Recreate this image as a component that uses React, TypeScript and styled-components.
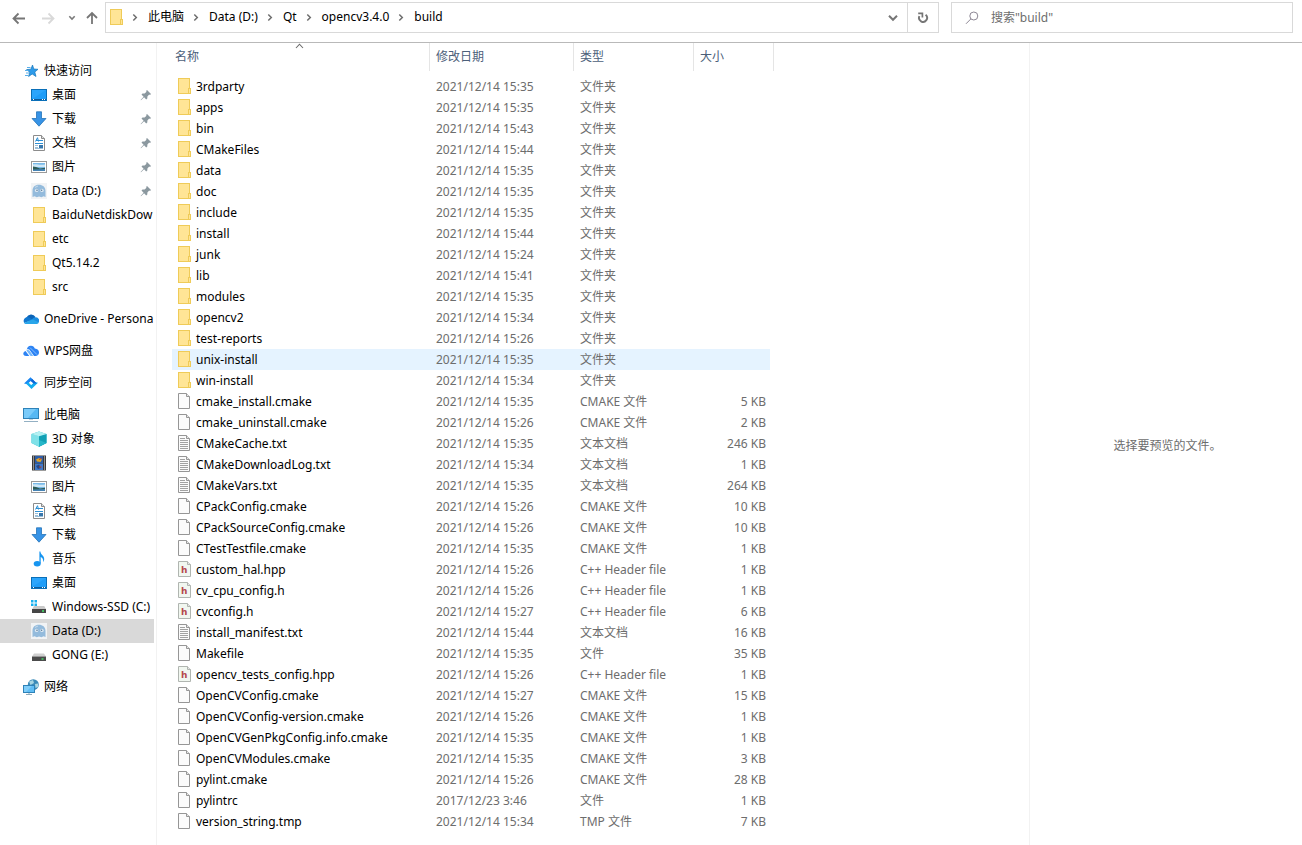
import React from "react";
import styled, { createGlobalStyle } from "styled-components";

const Global = createGlobalStyle`
  * { box-sizing: border-box; }
  body { margin: 0; background: #fff; }
  body, button, input, table {
    font-family: "Noto Sans", "Noto Sans CJK SC", sans-serif;
    font-size: 12px;
    line-height: 16px;
    color: #000;
  }
  svg { display: block; flex: none; }
`;

const Page = styled.div`
  display: flex;
  flex-direction: column;
  min-height: 100vh;
`;

const Toolbar = styled.header`
  display: flex;
  align-items: center;
  padding: 2px 9px 9px 7px;
  border-bottom: 1px solid #b9b9b9;
`;

const PlainButton = styled.button`
  display: flex;
  align-items: center;
  justify-content: center;
  margin: 0;
  padding: 0;
  border: 0;
  background: none;
  white-space: nowrap;
`;

const History = styled.nav`
  display: flex;
  align-items: center;
`;

const HistoryButton = styled(PlainButton)<{ $width: number }>`
  width: ${(p) => p.$width}px;
  height: 31px;
`;

const Fields = styled.div`
  display: grid;
  flex: 1;
  grid-template-columns: minmax(0, 39fr) minmax(0, 16fr);
  gap: 12px;
  min-width: 0;
`;

const AddressBar = styled.div`
  display: flex;
  height: 31px;
  border: 1px solid #d9d9d9;
`;

const Crumbs = styled.ol`
  display: flex;
  flex: 1;
  align-items: center;
  min-width: 0;
  margin: 0;
  padding: 0 0 2px 4px;
  overflow: hidden;
  list-style: none;
`;

const Crumb = styled.li`
  display: flex;
  align-items: center;
`;

const BarButton = styled(PlainButton)<{ $divided?: boolean }>`
  width: ${(p) => (p.$divided ? 31 : 28)}px;
  border-left: ${(p) => (p.$divided ? "1px solid #d9d9d9" : "0")};
`;

const SearchBox = styled.label`
  display: flex;
  align-items: center;
  gap: 12px;
  height: 31px;
  padding: 0 13px;
  border: 1px solid #d9d9d9;
`;

const SearchInput = styled.input`
  flex: 1;
  min-width: 0;
  padding: 0;
  border: 0;
  outline: 0;
  background: none;
  &::placeholder { color: #6d6d6d; opacity: 1; }
`;

const Body = styled.div`
  display: flex;
  flex: 1;
`;

const Sidebar = styled.nav`
  flex: none;
  width: 157px;
  padding: 16px 2px 0 0;
  border-right: 1px solid #f2f2f2;
`;

const Group = styled.ul`
  margin: 0 0 8px;
  padding: 0;
  list-style: none;
`;

const SideLink = styled.a<{ $nested: boolean; $active: boolean }>`
  display: flex;
  align-items: center;
  gap: 5px;
  height: 24px;
  padding-left: ${(p) => (p.$nested ? 31 : 23)}px;
  background: ${(p) => (p.$active ? "#d9d9d9" : "transparent")};
  color: #000;
  text-decoration: none;
`;

const SideLabel = styled.span`
  flex: 1;
  min-width: 0;
  overflow: hidden;
  white-space: nowrap;
`;

const PinSlot = styled.span`
  padding-right: 2px;
`;

const Main = styled.main`
  flex: 1;
  min-width: 617px;
  padding-left: 15px;
`;

const Files = styled.table`
  width: 602px;
  table-layout: fixed;
  border-collapse: separate;
  border-spacing: 0;
`;

const HeadCell = styled.th`
  position: relative;
  height: 28px;
  padding: 0;
  border-right: 1px solid #e5e5e5;
  font-weight: 400;
`;

const HeadButton = styled(PlainButton)<{ $first?: boolean }>`
  justify-content: flex-start;
  width: 100%;
  height: 28px;
  padding-left: ${(p) => (p.$first ? 3 : 6)}px;
  color: #4c607a;
`;

const SortMark = styled.span`
  position: absolute;
  top: 0;
  left: 0;
  right: 3px;
  display: flex;
  justify-content: center;
  pointer-events: none;
`;

const Spacer = styled.tbody`
  td { height: 5px; padding: 0; }
`;

const Cell = styled.td<{ $hot: boolean; $right?: boolean }>`
  height: 21px;
  padding: 0 4px 0 6px;
  overflow: hidden;
  background: ${(p) => (p.$hot ? "#e5f3ff" : "transparent")};
  color: #6d6d6d;
  text-align: ${(p) => (p.$right ? "right" : "left")};
  white-space: nowrap;
`;

const FileName = styled.span`
  display: flex;
  align-items: flex-start;
  gap: 5px;
  line-height: 17px;
  color: #000;
`;

const Preview = styled.aside`
  display: flex;
  align-items: center;
  justify-content: center;
  flex: 0 0 273px;
  padding: 3px 0 0 3px;
  border-left: 1px solid #f2f2f2;
  color: #6d6d6d;
`;

/* ---------- icons ---------- */

const Arrow = ({ color, flip }: { color: string; flip?: boolean }) => (
  <svg width="14" height="14" viewBox="0 0 14 14" fill="none" stroke={color} strokeWidth="1.8">
    {flip ? <path d="M1 7.5H12.5M7.5 2.5L12.5 7.5L7.5 12.5" /> : <path d="M13 7.5H1.5M6.5 2.5L1.5 7.5L6.5 12.5" />}
  </svg>
);

const UpArrow = () => (
  <svg width="12" height="14" viewBox="0 0 12 14" fill="none" stroke="#767676" strokeWidth="1.8">
    <path d="M6 13V2.5M1 7L6 2L11 7" />
  </svg>
);

const SmallDown = () => (
  <svg width="8" height="6" viewBox="0 0 8 6" fill="none" stroke="#7a7a7a" strokeWidth="1.6">
    <path d="M1.3 1.3L4 4L6.7 1.3" />
  </svg>
);

const WideDown = () => (
  <svg width="10" height="8" viewBox="0 0 10 8" fill="none" stroke="#767676" strokeWidth="2">
    <path d="M1 1.8L5 5.8L9 1.8" />
  </svg>
);

const CrumbChevron = () => (
  <svg width="25" height="16" viewBox="0 0 25 16" fill="none" stroke="#6e6e6e" strokeWidth="1.5">
    <path d="M10.3 5.5L13.3 8.5L10.3 11.5" />
  </svg>
);

const Refresh = () => (
  <svg width="12" height="14" viewBox="0 0 12 14" fill="none" stroke="#767676" strokeWidth="1.9">
    <path d="M8.6 3.8A4 4 0 1 1 2.4 5.2" />
    <path d="M1.2 2.4H5.4V6.6" strokeWidth="1.7" />
  </svg>
);

const SearchIcon = () => (
  <svg width="14" height="14" viewBox="0 0 14 14" fill="none" stroke="#8d8794" strokeWidth="1">
    <circle cx="8.8" cy="5" r="4" />
    <path d="M5.9 7.9L1 12.8" />
  </svg>
);

const SortArrow = () => (
  <svg width="9" height="6" viewBox="0 0 9 6" fill="none" stroke="#6a6a6a" strokeWidth="1.1">
    <path d="M1 5L4.5 1.2L8 5" />
  </svg>
);

const Pin = () => (
  <svg width="12" height="12" viewBox="0 0 12 12" fill="#8b989f">
    <path d="M7 1L11 5L10 6L9.2 5.6L7.4 7.5L7.3 9.5L6.2 10.4L4.1 8.3L1 11.3L.6 10.9L3.6 7.8L1.5 5.6L2.5 4.6L4.6 4.6L6.5 2.7L6.1 1.9Z" />
  </svg>
);

const FolderShape = () => (
  <g shapeRendering="crispEdges">
    <rect x="0.5" y="0.5" width="11" height="15" fill="#ffe596" stroke="#efcb58" />
    <rect x="10.5" y="10.5" width="2" height="5" fill="#ffe596" stroke="#efcb58" />
  </g>
);

const Folder = () => (
  <svg width="13" height="16" viewBox="0 0 13 16"><FolderShape /></svg>
);

const PageIcon = ({ kind }: { kind: "file" | "text" | "header" }) => {
  const edge = kind === "header" ? "#b0b5b0" : "#969696";
  return (
    <svg width="13" height="16" viewBox="0 0 13 16">
      <path
        d={kind === "header" ? "M.5 .5H9.5L12.5 3.5V15.5H.5Z" : "M.5 .5H8.5L11.5 3.5V15.5H.5Z"}
        fill={kind === "header" ? "#f1f7f0" : "#fbfbfb"}
        stroke={edge}
      />
      <path
        d={kind === "header" ? "M9.5 .5V3.5H12.5" : "M8.5 .5V3.5H11.5"}
        fill="#e6e6e6"
        stroke={edge}
      />
      {kind === "text" && (
        <path d="M2 3.5H7M2 5.5H10M2 7.5H10M2 9.5H10M2 11.5H10M2 13.5H10" stroke="#a2a2a2" shapeRendering="crispEdges" />
      )}
      {kind === "header" && (
        <text x="3" y="12" fontFamily="DejaVu Sans, sans-serif" fontWeight="700" fontSize="9" fill="#b5474c">h</text>
      )}
    </svg>
  );
};

type SideIconName =
  | "star" | "desktop" | "download" | "doc" | "picture" | "ghost" | "folder" | "onedrive" | "wps"
  | "sync" | "pc" | "cube" | "video" | "music" | "ssd" | "drive" | "network";

const drawings: Record<SideIconName, React.ReactNode> = {
  star: (
    <>
      <path d="M9.5 2L10.8 6L15 6.3L11.8 9L13 13.5L9.2 11L5.6 13.5L6.8 9.2L3.6 6.6L7.9 6.2Z" fill="#2e9bea" stroke="#1577bb" strokeWidth=".7" />
      <path d="M4 4.5H7.5M2 7.5H5.5M3 10H6M2 12.5H5.5" stroke="#5aaee8" strokeWidth="1" />
    </>
  ),
  desktop: (
    <>
      <rect x=".5" y="2.5" width="15" height="11" fill="#1f9df8" stroke="#0a6fb8" />
      <path d="M1 3L15 3L1 12Z" fill="#38adff" opacity=".5" />
      <path d="M1 12.5H15" stroke="#0d5c9c" />
      <path d="M2 12.5H3M11 12.5H12M13 12.5H14" stroke="#fff" />
    </>
  ),
  download: <path d="M5.5 .8H10.5V7.5H15L8 15.2L1 7.5H5.5Z" fill="#3793e6" stroke="#2474b8" strokeWidth=".8" />,
  doc: (
    <>
      <path d="M2.5 .5H10.5L13.5 3.5V15.5H2.5Z" fill="#fff" stroke="#8c8c8c" />
      <path d="M10.5 .5V3.5H13.5" fill="#ddd" stroke="#8c8c8c" />
      <path d="M4.5 6.5L6.5 2.7L7.5 6.5M5 5.5H12M4 8.5H12" stroke="#2c8fd4" fill="none" />
      <path d="M4 10.5H7M4 12.5H7M4 13.5H12" stroke="#9cbfd8" />
      <rect x="8" y="10" width="4" height="3" fill="#3977ac" />
    </>
  ),
  picture: (
    <>
      <rect x=".5" y="2.5" width="15" height="11" fill="#fff" stroke="#9a9a9a" />
      <rect x="2" y="4" width="12" height="8" fill="#79bae8" />
      <path d="M2 5.5C5 4.5 8 6.5 14 5.5V8H2Z" fill="#cfe7f6" />
      <path d="M2 7.5L5 8L9 9.4L14 8.7V12H2Z" fill="#2e5c55" />
      <path d="M2 10.5L14 10V12H2Z" fill="#4583b4" />
    </>
  ),
  ghost: (
    <>
      <rect width="16" height="16" fill="#f1f3f5" />
      <path d="M1.5 14V8C1.5 4 4 1.8 7.8 1.8S14.5 4 14.5 8V14L12.5 13.2L10.5 14.3L8 13.4L5.8 14.3L3.6 13.2Z" fill="#94bbdc" />
      <path d="M4 4.4L7 3" stroke="#c7dcec" />
      <circle cx="5.6" cy="7.4" r="1.7" fill="#dfeaf3" />
      <circle cx="11" cy="7.4" r="1.7" fill="#dfeaf3" />
      <circle cx="6" cy="7.3" r=".8" fill="#5b7d9b" />
      <circle cx="10.6" cy="7.3" r=".8" fill="#5b7d9b" />
    </>
  ),
  folder: <g transform="translate(2 0)"><FolderShape /></g>,
  onedrive: (
    <>
      <path d="M3.5 6.6A5 5 0 0 1 12.5 5.9L9 10.6L2 8.6Z" fill="#0b64b8" />
      <path d="M3.6 6.2A3.9 3.9 0 0 0 1.3 12.1L10 8.8L6.6 6.8A4 4 0 0 0 3.6 6.2Z" fill="#1177cf" />
      <path d="M9.2 8A4.2 4.2 0 0 1 13 6.2A3.4 3.4 0 0 1 15.6 11.4L11 10.6Z" fill="#1b8ce0" />
      <path d="M1 11.9L9.5 8.3L15.9 11.4C15.2 12.6 14.2 13 13 13H4C2.8 13 1.8 12.8 1 11.9Z" fill="#29a6ea" />
    </>
  ),
  wps: (
    <>
      <path d="M4 6.1A4 4 0 0 1 11.8 5.6C14.6 5.8 16 7.6 16 9.6C16 11.8 14.5 13.1 12.5 13.1H11L6.3 6.4Z" fill="#2c83f4" />
      <path d="M3.2 6.8C4.6 6.4 6 6.8 7 8.2L10.2 13.1H7.6L4.2 8.4Z" fill="#74b7fb" />
      <path d="M2.6 7.9C1 8.5 .1 9.6 .3 11.1C.5 12.4 1.6 13.1 3 13.1H6.3Z" fill="#2c83f4" />
      <path d="M7 4.6L14 11.6" stroke="#9fcdfc" strokeWidth=".8" />
    </>
  ),
  sync: (
    <>
      <path d="M1 8.5L7.5 2.2L12.8 7.4L10.8 9.2L7.7 6.1L4.5 9.2Z" fill="#1a86f2" />
      <path d="M15 7.7L8.5 14L3.2 8.8L5.2 7L8.3 10.1L11.5 7Z" fill="#13aef0" />
      <path d="M9 3.7L13.8 8.4H10.6L7.7 6.1Z" fill="#0e65d6" />
      <path d="M8 6.4L9.8 8.1L8 9.8L6.2 8.1Z" fill="#fff" />
    </>
  ),
  pc: (
    <>
      <rect x=".5" y="1.5" width="15" height="10" fill="#57b8f3" stroke="#2e82b8" />
      <path d="M1 2H13L5 11H1Z" fill="#83d0fb" opacity=".8" />
      <path d="M6 12.5H10" stroke="#c3d2dc" />
      <path d="M1 14.5H15" stroke="#93b0c3" />
    </>
  ),
  cube: (
    <>
      <path d="M8 .5L15.5 3V12L8 15.8L.5 12V3Z" fill="#2cbccd" />
      <path d="M.5 3L8 5V15.8L.5 12Z" fill="#7fe1e8" />
      <path d="M8 5L15.5 3V12L8 15.8Z" fill="#11a0b5" />
      <path d="M.5 3L8 .5L15.5 3L8 5.3Z" fill="#b4f0f2" />
      <path d="M8 9L15.5 12L8 15.8Z" fill="#27b7c9" />
    </>
  ),
  video: (
    <>
      <rect x="1" y=".5" width="14" height="15" fill="#3a3a3a" />
      <path d="M2.5 1.5V15M13.5 1.5V15" stroke="#e8e8e8" strokeWidth="1" strokeDasharray="1 1" />
      <rect x="4" y="1" width="8" height="7" fill="#2d5ea8" />
      <rect x="4" y="8.5" width="8" height="6.5" fill="#3f78c9" />
      <path d="M5 4.5L8 3L11 4.5L9.5 7L6 6.5Z" fill="#e0a526" />
      <path d="M5 11L8 9.5L10 13L7 14Z" fill="#264884" />
      <path d="M8 4.5L10.5 3.5M8 12H10.5" stroke="#c4442c" />
    </>
  ),
  music: (
    <>
      <path d="M8.4 .5H9.4C9.8 4 13.2 4.5 13.2 8C13.2 9.3 12.6 10.3 12 11C12.5 8 11.5 6.7 9.7 6V12.5H8.4Z" fill="#1795f0" />
      <ellipse cx="6.2" cy="12.8" rx="3.5" ry="2.7" fill="#1795f0" />
    </>
  ),
  ssd: (
    <>
      <path d="M0 1H2.5V3.5H0ZM3.5 1H6V3.5H3.5ZM0 4.5H2.5V7H0ZM3.5 4.5H6V7H3.5Z" fill="#18b0ee" />
      <path d="M3 7H13.2L15 10H1.2Z" fill="#c9c9c9" />
      <path d="M1 10H15V14H1Z" fill="#464646" />
      <path d="M11 12H13" stroke="#45e36b" strokeWidth="1.4" />
    </>
  ),
  drive: (
    <>
      <path d="M3 6.5H13L15 9.5H1Z" fill="#d0d0d0" />
      <path d="M1 9.5H15V14H1Z" fill="#4b4b4b" />
      <path d="M10.5 12H12.5" stroke="#45e36b" strokeWidth="1.4" />
    </>
  ),
  network: (
    <>
      <circle cx="10.3" cy="5.7" r="5.5" fill="#3b8bb8" />
      <path d="M6 2.5L10 1L11 4L7.5 6ZM12 5L15 4.5L15.2 8L12.5 9Z" fill="#a8d5e2" />
      <rect x=".5" y="6.5" width="11" height="7" fill="#60bdf4" stroke="#2e82b8" />
      <path d="M1 7H9L3 13H1Z" fill="#8fd4fb" opacity=".7" />
      <path d="M3 15.5H9M6 14V15" stroke="#8daabb" />
    </>
  ),
};

const SideIcon = ({ name }: { name: SideIconName }) => (
  <svg width="16" height="16" viewBox="0 0 16 16" fill="none">{drawings[name]}</svg>
);

/* ---------- data ---------- */

type SideEntry = { icon: SideIconName; label: string; root?: boolean; pinned?: boolean; active?: boolean };

const groups: SideEntry[][] = [
  [
    { icon: "star", label: "快速访问", root: true },
    { icon: "desktop", label: "桌面", pinned: true },
    { icon: "download", label: "下载", pinned: true },
    { icon: "doc", label: "文档", pinned: true },
    { icon: "picture", label: "图片", pinned: true },
    { icon: "ghost", label: "Data (D:)", pinned: true },
    { icon: "folder", label: "BaiduNetdiskDow" },
    { icon: "folder", label: "etc" },
    { icon: "folder", label: "Qt5.14.2" },
    { icon: "folder", label: "src" },
  ],
  [{ icon: "onedrive", label: "OneDrive - Persona", root: true }],
  [{ icon: "wps", label: "WPS网盘", root: true }],
  [{ icon: "sync", label: "同步空间", root: true }],
  [
    { icon: "pc", label: "此电脑", root: true },
    { icon: "cube", label: "3D 对象" },
    { icon: "video", label: "视频" },
    { icon: "picture", label: "图片" },
    { icon: "doc", label: "文档" },
    { icon: "download", label: "下载" },
    { icon: "music", label: "音乐" },
    { icon: "desktop", label: "桌面" },
    { icon: "ssd", label: "Windows-SSD (C:)" },
    { icon: "ghost", label: "Data (D:)", active: true },
    { icon: "drive", label: "GONG (E:)" },
  ],
  [{ icon: "network", label: "网络", root: true }],
];

const DAY = "2021/12/14 ";

const folders: [string, string][] = [
  ["3rdparty", "15:35"], ["apps", "15:35"], ["bin", "15:43"], ["CMakeFiles", "15:44"],
  ["data", "15:35"], ["doc", "15:35"], ["include", "15:35"], ["install", "15:44"],
  ["junk", "15:24"], ["lib", "15:41"], ["modules", "15:35"], ["opencv2", "15:34"],
  ["test-reports", "15:26"], ["unix-install", "15:35"], ["win-install", "15:34"],
];

const files: [string, string, string, string][] = [
  ["cmake_install.cmake", DAY + "15:35", "CMAKE 文件", "5 KB"],
  ["cmake_uninstall.cmake", DAY + "15:26", "CMAKE 文件", "2 KB"],
  ["CMakeCache.txt", DAY + "15:35", "文本文档", "246 KB"],
  ["CMakeDownloadLog.txt", DAY + "15:34", "文本文档", "1 KB"],
  ["CMakeVars.txt", DAY + "15:35", "文本文档", "264 KB"],
  ["CPackConfig.cmake", DAY + "15:26", "CMAKE 文件", "10 KB"],
  ["CPackSourceConfig.cmake", DAY + "15:26", "CMAKE 文件", "10 KB"],
  ["CTestTestfile.cmake", DAY + "15:35", "CMAKE 文件", "1 KB"],
  ["custom_hal.hpp", DAY + "15:26", "C++ Header file", "1 KB"],
  ["cv_cpu_config.h", DAY + "15:26", "C++ Header file", "1 KB"],
  ["cvconfig.h", DAY + "15:27", "C++ Header file", "6 KB"],
  ["install_manifest.txt", DAY + "15:44", "文本文档", "16 KB"],
  ["Makefile", DAY + "15:35", "文件", "35 KB"],
  ["opencv_tests_config.hpp", DAY + "15:26", "C++ Header file", "1 KB"],
  ["OpenCVConfig.cmake", DAY + "15:27", "CMAKE 文件", "15 KB"],
  ["OpenCVConfig-version.cmake", DAY + "15:26", "CMAKE 文件", "1 KB"],
  ["OpenCVGenPkgConfig.info.cmake", DAY + "15:35", "CMAKE 文件", "1 KB"],
  ["OpenCVModules.cmake", DAY + "15:35", "CMAKE 文件", "3 KB"],
  ["pylint.cmake", DAY + "15:26", "CMAKE 文件", "28 KB"],
  ["pylintrc", "2017/12/23 3:46", "文件", "1 KB"],
  ["version_string.tmp", DAY + "15:34", "TMP 文件", "7 KB"],
];

const rows = [
  ...folders.map(([name, time]) => ({ name, date: DAY + time, type: "文件夹", size: "" })),
  ...files.map(([name, date, type, size]) => ({ name, date, type, size })),
];

const FileIcon = ({ type }: { type: string }) => {
  if (type === "文件夹") return <Folder />;
  if (type === "文本文档") return <PageIcon kind="text" />;
  if (type === "C++ Header file") return <PageIcon kind="header" />;
  return <PageIcon kind="file" />;
};

export default function App() {
  return (
    <Page>
      <Global />
      <Toolbar>
        <History aria-label="历史">
          <HistoryButton $width={23} aria-label="后退"><Arrow color="#767676" /></HistoryButton>
          <HistoryButton $width={35} aria-label="前进"><Arrow color="#d9d9d9" flip /></HistoryButton>
          <HistoryButton $width={13} aria-label="最近位置"><SmallDown /></HistoryButton>
          <HistoryButton $width={27} aria-label="上移"><UpArrow /></HistoryButton>
        </History>
        <Fields>
          <AddressBar>
            <Crumbs>
              <Crumb><Folder /></Crumb>
              {["此电脑", "Data (D:)", "Qt", "opencv3.4.0", "build"].map((c) => (
                <Crumb key={c}>
                  <CrumbChevron />
                  <PlainButton>{c}</PlainButton>
                </Crumb>
              ))}
            </Crumbs>
            <BarButton aria-label="历史地址"><WideDown /></BarButton>
            <BarButton $divided aria-label="刷新"><Refresh /></BarButton>
          </AddressBar>
          <SearchBox>
            <SearchIcon />
            <SearchInput type="text" aria-label="搜索" placeholder={'搜索"build"'} />
          </SearchBox>
        </Fields>
      </Toolbar>
      <Body>
        <Sidebar aria-label="导航窗格">
          {groups.map((group, i) => (
            <Group key={i}>
              {group.map((e) => (
                <li key={e.label}>
                  <SideLink href="#" $nested={!e.root} $active={!!e.active}>
                    <SideIcon name={e.icon} />
                    <SideLabel>{e.label}</SideLabel>
                    {e.pinned && <PinSlot><Pin /></PinSlot>}
                  </SideLink>
                </li>
              ))}
            </Group>
          ))}
        </Sidebar>
        <Main>
          <Files>
            <colgroup>
              <col width="258" />
              <col width="144" />
              <col width="120" />
              <col width="76" />
              <col width="4" />
            </colgroup>
            <thead>
              <tr>
                <HeadCell scope="col" aria-sort="ascending">
                  <HeadButton $first>名称</HeadButton>
                  <SortMark><SortArrow /></SortMark>
                </HeadCell>
                <HeadCell scope="col"><HeadButton>修改日期</HeadButton></HeadCell>
                <HeadCell scope="col"><HeadButton>类型</HeadButton></HeadCell>
                <HeadCell scope="col" colSpan={2}><HeadButton>大小</HeadButton></HeadCell>
              </tr>
            </thead>
            <Spacer aria-hidden="true"><tr><td colSpan={5} /></tr></Spacer>
            <tbody>
              {rows.map((r) => {
                const hot = r.name === "unix-install";
                return (
                  <tr key={r.name}>
                    <Cell $hot={hot}><FileName><FileIcon type={r.type} />{r.name}</FileName></Cell>
                    <Cell $hot={hot}>{r.date}</Cell>
                    <Cell $hot={hot}>{r.type}</Cell>
                    <Cell $hot={hot} $right>{r.size}</Cell>
                  </tr>
                );
              })}
            </tbody>
          </Files>
        </Main>
        <Preview>选择要预览的文件。</Preview>
      </Body>
    </Page>
  );
}
